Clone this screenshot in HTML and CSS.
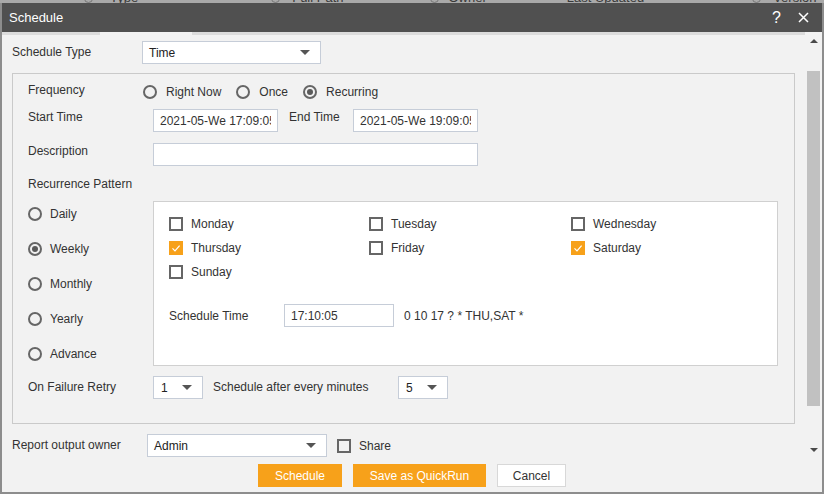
FILE: index.html
```html
<!DOCTYPE html>
<html>
<head>
<meta charset="utf-8">
<title>Schedule</title>
<link rel="stylesheet" href="styles.css">
</head>
<body>
<div class="bgbar">
  <span class="bgicon i1"></span><span class="bgtext t1">Type</span>
  <span class="bgicon i2"></span><span class="bgtext t2">Full Path</span>
  <span class="bgicon i3"></span><span class="bgtext t3">Owner</span>
  <span class="bgtext t4">Last Updated</span>
  <span class="bgicon i5"></span><span class="bgtext t5">Version</span>
</div>
<div class="dialog">
  <div class="titlebar">
    <span class="title">Schedule</span>
    <div class="tools">
      <span class="help">?</span>
      <svg class="close" width="11" height="11" viewBox="0 0 11 11"><path d="M1 1 L10 10 M10 1 L1 10" stroke="#fff" stroke-width="1.5" fill="none"/></svg>
    </div>
  </div>
  <div class="tabstrip"><span class="seg seg-a"></span><span class="seg seg-b"></span><span class="seg seg-c"></span><span class="seg seg-d"></span></div>
  <div class="main">
    <div class="content">
      <div class="row type-row">
        <span class="lbl lbl-type">Schedule Type</span>
        <div class="select sel-type"><span>Time</span><i class="caret"></i></div>
      </div>

      <div class="fieldset">
        <div class="frow freq-row">
          <span class="lbl lbl-freq">Frequency</span>
          <div class="radios">
            <span class="radio"></span><span class="rtext">Right Now</span>
            <span class="radio"></span><span class="rtext">Once</span>
            <span class="radio on"></span><span class="rtext">Recurring</span>
          </div>
        </div>
        <div class="frow time-row">
          <span class="lbl lbl-top">Start Time</span>
          <input class="input in-time" type="text" value="2021-05-We 17:09:05">
          <span class="lbl lbl-end">End Time</span>
          <input class="input in-time" type="text" value="2021-05-We 19:09:05">
        </div>
        <div class="frow desc-row">
          <span class="lbl lbl-top">Description</span>
          <input class="input in-desc" type="text" value="">
        </div>
        <div class="rec-label">Recurrence Pattern</div>
        <div class="pattern">
          <div class="pattern-radios">
            <div class="prow"><span class="radio"></span><span class="ptext">Daily</span></div>
            <div class="prow"><span class="radio on"></span><span class="ptext">Weekly</span></div>
            <div class="prow"><span class="radio"></span><span class="ptext">Monthly</span></div>
            <div class="prow"><span class="radio"></span><span class="ptext">Yearly</span></div>
            <div class="prow"><span class="radio"></span><span class="ptext">Advance</span></div>
          </div>
          <div class="pattern-box">
            <div class="days">
              <div class="day"><span class="cb"></span><span>Monday</span></div>
              <div class="day"><span class="cb"></span><span>Tuesday</span></div>
              <div class="day"><span class="cb"></span><span>Wednesday</span></div>
              <div class="day"><span class="cb on"><svg width="14" height="14" viewBox="0 0 14 14"><path d="M3.5 7.3 L6 9.8 L10.6 4.6" stroke="#fff" stroke-width="1.2" fill="none"/></svg></span><span>Thursday</span></div>
              <div class="day"><span class="cb"></span><span>Friday</span></div>
              <div class="day"><span class="cb on"><svg width="14" height="14" viewBox="0 0 14 14"><path d="M3.5 7.3 L6 9.8 L10.6 4.6" stroke="#fff" stroke-width="1.2" fill="none"/></svg></span><span>Saturday</span></div>
              <div class="day"><span class="cb"></span><span>Sunday</span></div>
            </div>
            <div class="stime-row">
              <span class="lbl lbl-stime">Schedule Time</span>
              <input class="input in-stime" type="text" value="17:10:05">
              <span class="cron">0 10 17 ? * THU,SAT *</span>
            </div>
          </div>
        </div>
        <div class="frow retry-row">
          <span class="lbl lbl-retry">On Failure Retry</span>
          <div class="select sel-small"><span>1</span><i class="caret"></i></div>
          <span class="lbl lbl-every">Schedule after every minutes</span>
          <div class="select sel-small"><span>5</span><i class="caret"></i></div>
        </div>
      </div>

      <div class="row owner-row">
        <span class="lbl lbl-owner">Report output owner</span>
        <div class="select sel-owner"><span>Admin</span><i class="caret"></i></div>
        <span class="cb cb-share"></span><span class="share">Share</span>
      </div>
    </div>
    <div class="scrollbar">
      <i class="arrow-up"></i>
      <div class="thumb"></div>
      <i class="arrow-down"></i>
    </div>
  </div>
  <div class="footer">
    <button class="btn btn-primary btn-schedule">Schedule</button>
    <button class="btn btn-primary btn-quick">Save as QuickRun</button>
    <button class="btn btn-cancel">Cancel</button>
  </div>
</div>
</body>
</html>
```

FILE: styles.css
```css
* { box-sizing: border-box; }

body {
  margin: 0;
  width: 824px;
  height: 494px;
  overflow: hidden;
  background: #8d8d8d;
  font-family: "Liberation Sans", Arial, sans-serif;
  font-size: 12px;
  color: #333;
}

/* background page peeking above the dialog */
.bgbar {
  height: 3px;
  overflow: hidden;
  background: #a9a9a9;
  display: flex;
  align-items: flex-start;
}
.bgtext {
  font-size: 13px;
  line-height: 13px;
  margin-top: -9px;
  color: #3a3a3a;
  white-space: nowrap;
}
.bgicon {
  width: 9px;
  height: 9px;
  border: 1px solid #777;
  border-radius: 50%;
  margin-top: -6px;
}
.i1 { margin-left: 84px; }
.t1 { margin-left: 17px; }
.i2 { margin-left: 133px; }
.t2 { margin-left: 12px; }
.i3 { margin-left: 86px; }
.t3 { margin-left: 10px; }
.t4 { margin-left: 80px; }
.i5 { margin-left: 108px; }
.t5 { margin-left: 12px; }

.dialog {
  margin: 0 2px;
  width: 820px;
  height: 489px;
  background: #f2f2f2;
  display: flex;
  flex-direction: column;
}

.titlebar {
  height: 29px;
  flex: none;
  background: #505050;
  color: #fff;
  display: flex;
  align-items: center;
  justify-content: space-between;
  padding: 0 13px 0 7px;
}
.title {
  font-size: 13px;
  margin-top: -1px;
}
.tools {
  display: flex;
  align-items: center;
}
.help {
  font-size: 16px;
  line-height: 16px;
  margin-right: 17px;
  color: #fff;
}
.close { display: block; }

.tabstrip {
  height: 3px;
  flex: none;
  display: flex;
}
.seg { display: block; height: 3px; }
.seg-a { width: 98px; background: #dcdcdc; }
.seg-b { width: 92px; background: #f2f2f2; }
.seg-c { flex: 1; background: #dcdcdc; }
.seg-d { width: 17px; background: #f2f2f2; }

.main {
  height: 425px;
  flex: none;
  display: flex;
}
.content {
  width: 803px;
  padding: 6px 10px 0 10px;
  overflow: hidden;
}

.scrollbar {
  width: 17px;
  display: flex;
  flex-direction: column;
  align-items: center;
  padding-top: 4px;
}
.arrow-up {
  width: 0; height: 0;
  border-left: 4px solid transparent;
  border-right: 4px solid transparent;
  border-bottom: 4px solid #4a4a4a;
}
.thumb {
  width: 13px;
  height: 335px;
  margin-top: 28px;
  background: #c1c1c1;
}
.arrow-down {
  margin-top: 42px;
  width: 0; height: 0;
  border-left: 4px solid transparent;
  border-right: 4px solid transparent;
  border-top: 4px solid #4a4a4a;
}

/* generic */
.row, .frow {
  display: flex;
  align-items: center;
}
.lbl { white-space: nowrap; }

.select {
  height: 23px;
  background: #fff;
  border: 1px solid #c6cdd8;
  display: flex;
  align-items: center;
  justify-content: space-between;
  padding: 0 10px 0 6px;
  color: #222;
}
.caret {
  width: 0; height: 0;
  border-left: 5px solid transparent;
  border-right: 5px solid transparent;
  border-top: 5px solid #555;
}
.input {
  height: 23px;
  border: 1px solid #c6cdd8;
  background: #fff;
  font-family: "Liberation Sans", Arial, sans-serif;
  font-size: 12px;
  color: #333;
  padding: 0 6px;
  margin: 0;
  outline: none;
}

.radio {
  width: 14px;
  height: 14px;
  border: 2px solid #666;
  border-radius: 50%;
  background: transparent;
  display: inline-flex;
  align-items: center;
  justify-content: center;
  flex: none;
}
.radio.on::after {
  content: "";
  width: 6px;
  height: 6px;
  border-radius: 50%;
  background: #5a5a5a;
}

.cb {
  width: 14px;
  height: 14px;
  border: 2px solid #666;
  background: #fff;
  display: inline-flex;
  flex: none;
  align-items: center;
  justify-content: center;
}
.cb.on {
  border: none;
  background: #f7a11a;
}
.cb svg { display: block; }

/* schedule type */
.type-row { height: 23px; }
.lbl-type { width: 130px; margin-top: -2px; }
.sel-type { width: 179px; }

/* fieldset */
.fieldset {
  margin-top: 9px;
  border: 1px solid #cacaca;
  padding: 7px 0 24px 15px;
}
.freq-row { height: 20px; }
.lbl-freq { width: 115px; margin-top: -2px; }
.radios {
  display: flex;
  align-items: center;
  margin-top: 2px;
}
.rtext { margin-left: 9px; margin-right: 15px; }

.time-row {
  margin-top: 8px;
  height: 23px;
  align-items: flex-start;
}
.lbl-top { width: 125px; line-height: 17px; }
.in-time { width: 125px; }
.lbl-end { width: 64px; margin-left: 11px; line-height: 17px; }

.desc-row {
  margin-top: 11px;
  height: 23px;
  align-items: flex-start;
}
.in-desc { width: 325px; }

.rec-label {
  margin-top: 11px;
  height: 14px;
  line-height: 14px;
}

.pattern {
  margin-top: 10px;
  display: flex;
}
.pattern-radios {
  width: 125px;
  padding-top: 3px;
  display: flex;
  flex-direction: column;
  gap: 15px;
}
.prow {
  height: 20px;
  display: flex;
  align-items: center;
}
.ptext { margin-left: 8px; }

.pattern-box {
  width: 625px;
  height: 165px;
  background: #fff;
  border: 1px solid #d0d0d0;
  padding: 15px 0 0 15px;
}
.days {
  display: grid;
  grid-template-columns: 200px 202px 1fr;
  grid-auto-rows: 14px;
  row-gap: 10px;
}
.day {
  display: flex;
  align-items: center;
  gap: 8px;
  white-space: nowrap;
}
.stime-row {
  margin-top: 25px;
  display: flex;
  align-items: center;
  height: 23px;
}
.lbl-stime { width: 115px; }
.in-stime { width: 110px; }
.cron { margin-left: 10px; color: #333; }

.retry-row {
  margin-top: 10px;
  height: 23px;
}
.lbl-retry { width: 125px; margin-top: -2px; }
.sel-small { width: 50px; padding-left: 7px; }
.lbl-every { width: 195px; padding-left: 10px; margin-top: -2px; }

/* owner row */
.owner-row {
  margin-top: 10px;
  height: 23px;
}
.lbl-owner { width: 135px; margin-top: -2px; }
.sel-owner { width: 180px; }
.cb-share { margin-left: 10px; width: 14px; height: 14px; background: transparent; }
.share { margin-left: 8px; margin-top: 1px; }

/* footer */
.footer {
  flex: 1;
  display: flex;
  justify-content: center;
  align-items: flex-start;
  padding-top: 4px;
  gap: 11px;
}
.btn {
  height: 23px;
  font-family: "Liberation Sans", Arial, sans-serif;
  font-size: 12px;
  border: none;
  padding: 0;
  margin: 0;
  cursor: pointer;
}
.btn-primary {
  background: #f7a11a;
  color: #fff;
}
.btn-schedule { width: 84px; }
.btn-quick { width: 133px; }
.btn-cancel {
  width: 69px;
  background: #fff;
  border: 1px solid #d8d8d8;
  color: #333;
}
```
